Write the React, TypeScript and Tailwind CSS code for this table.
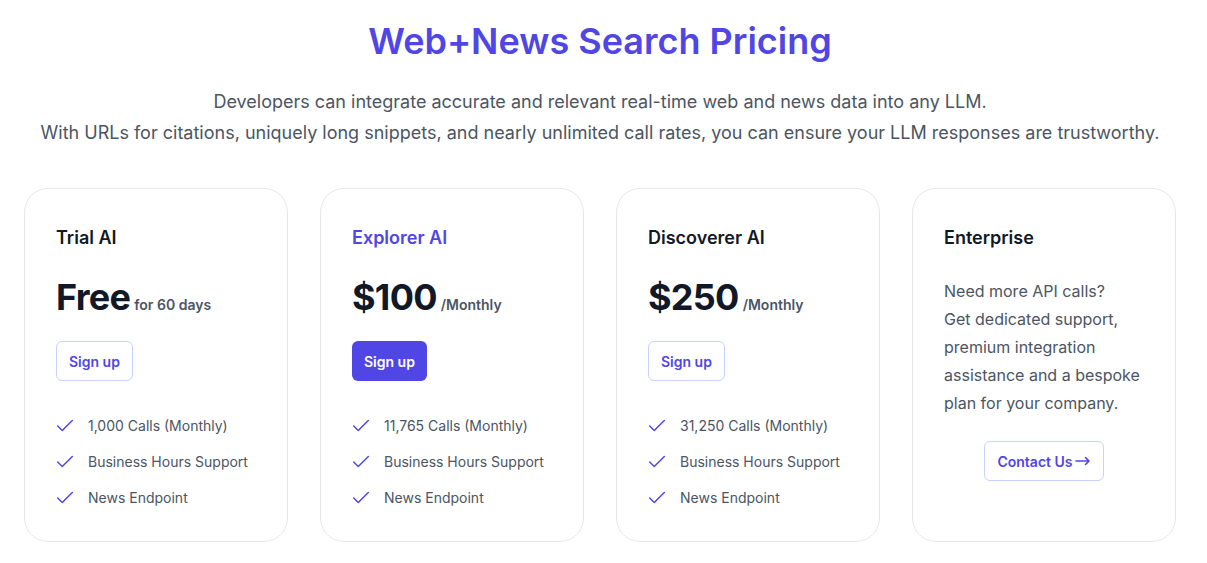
import React from "react";

const Check = () => (
  <svg width="22" height="22" viewBox="0 0 24 24" fill="none" stroke="#4f46e5" strokeWidth="1.6" strokeLinecap="round" strokeLinejoin="round">
    <path d="M20 6 9 17l-5-5" />
  </svg>
);

type Plan = { name: string; highlight?: boolean; price: string; unit: string; calls: string; filled?: boolean };

const plans: Plan[] = [
  { name: "Trial AI", price: "Free", unit: "for 60 days", calls: "1,000 Calls (Monthly)" },
  { name: "Explorer AI", highlight: true, filled: true, price: "$100", unit: "/Monthly", calls: "11,765 Calls (Monthly)" },
  { name: "Discoverer AI", price: "$250", unit: "/Monthly", calls: "31,250 Calls (Monthly)" },
];

export default function App() {
  return (
    <div className="min-h-[563px] w-[1200px] bg-white" style={{ fontFamily: "Inter, 'Noto Sans', sans-serif" }}>
      <div className="pt-[18px] text-center">
        <h1 className="text-[36px] leading-[46px] font-semibold text-[#4f46e5]">Web+News Search Pricing</h1>
        <div className="mt-[22px] text-[18px] leading-[31px] text-[#4b5563]">
          <p>Developers can integrate accurate and relevant real-time web and news data into any LLM.</p>
          <p>With URLs for citations, uniquely long snippets, and nearly unlimited call rates, you can ensure your LLM responses are trustworthy.</p>
        </div>
      </div>
      <div className="mt-[40px] pl-6 grid grid-cols-[repeat(4,264px)] gap-8">
        {plans.map((p) => (
          <div key={p.name} className="h-[354px] rounded-3xl border border-[#e5e7eb] pl-[31px] pr-6 pt-[38px]">
            <h3 className={`text-[18px] leading-[22px] font-semibold ${p.highlight ? "text-[#4f46e5]" : "text-[#111827]"}`}>{p.name}</h3>
            <div className="mt-[28px] flex items-baseline gap-1">
              <span className="text-[36px] leading-[40px] font-bold tracking-[-0.02em] text-[#111827]">{p.price}</span>
              <span className="text-[14px] font-semibold text-[#4b5563]">{p.unit}</span>
            </div>
            <button
              className={`mt-[24px] h-10 px-3 rounded-md text-[14px] font-semibold ${
                p.filled ? "bg-[#4f46e5] text-white" : "border border-[#c7d2fe] text-[#4f46e5]"
              }`}
            >
              Sign up
            </button>
            <ul className="mt-[34px] flex flex-col gap-[14px] text-[14px] leading-5 text-[#4b5563]">
              {[p.calls, "Business Hours Support", "News Endpoint"].map((f) => (
                <li key={f} className="flex items-center gap-[12px]">
                  <span className="-ml-[2px] flex"><Check /></span>
                  {f}
                </li>
              ))}
            </ul>
          </div>
        ))}
        <div className="h-[354px] rounded-3xl border border-[#e5e7eb] px-[31px] pt-[38px] flex flex-col">
          <h3 className="text-[18px] leading-[22px] font-semibold text-[#111827]">Enterprise</h3>
          <p className="mt-[28px] text-[16px] leading-[28px] text-[#4b5563]">
            Need more API calls?<br />Get dedicated support, premium integration assistance and a bespoke plan for your company.
          </p>
          <div className="mt-[24px] flex justify-center">
            <button className="h-10 px-[12px] rounded-md border border-[#c7d2fe] text-[14px] font-semibold text-[#4f46e5] flex items-center gap-[2px]">
              Contact Us
              <svg width="16" height="10" viewBox="0 0 16 10" fill="none" stroke="#4f46e5" strokeWidth="1.6" strokeLinecap="round" strokeLinejoin="round">
                <path d="M1 5h13M10.5 1.5 14 5l-3.5 3.5" />
              </svg>
            </button>
          </div>
        </div>
      </div>
    </div>
  );
}
